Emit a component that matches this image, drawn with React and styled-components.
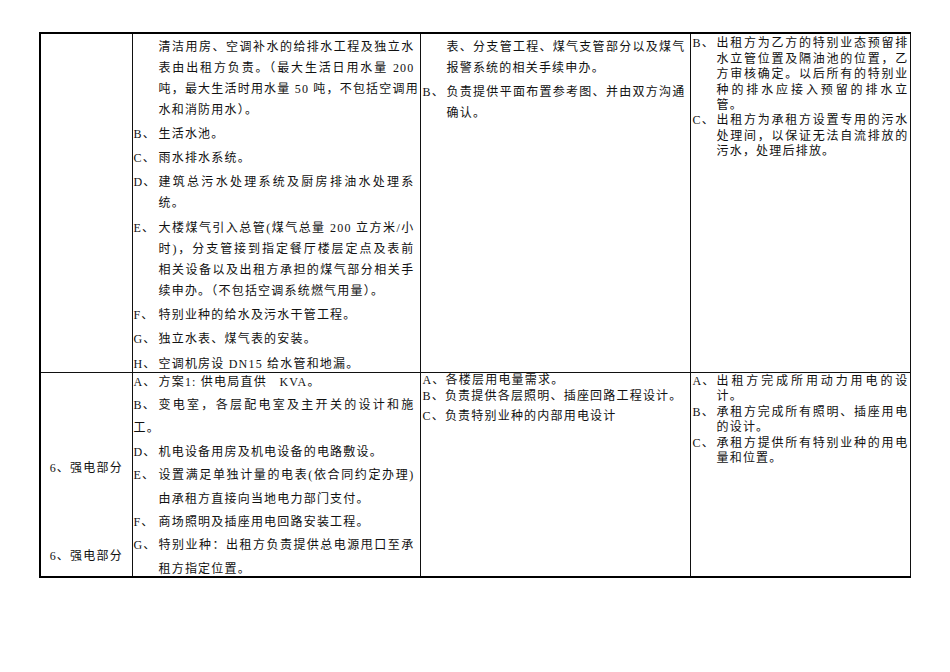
import styled, { createGlobalStyle } from "styled-components";

const Page = createGlobalStyle`
    body {
        margin: 0;
        background: #fff;
    }
`

const Wrapper = styled.div`
    padding: 32px 0 0 39px;
`

const Sheet = styled.table`
    border-collapse: collapse;
    table-layout: fixed;
    width: 870px;
    font-family: "Liberation Serif", "Noto Sans CJK SC", serif;
    font-size: 12px;
    letter-spacing: 1.2px;
    color: #111;
    border-left: 2px solid #000;
    border-top: 2px solid #000;
    border-bottom: 2px solid #000;
`

const Cell = styled.td`
    border: 1px solid #111;
    vertical-align: top;
    padding: 0 ${p => p.$pr}px 0 ${p => p.$pl}px;
`

// fixed box: negative offsets pull the text up without growing the row
const Body = styled.div`
    display: flow-root;
    margin-top: ${p => p.$pt}px;
    height: ${p => p.$t - p.$pt}px;
    line-height: ${p => p.$lh}px;
`

const Item = styled.div`
    margin-top: ${p => p.$gap}px;

    &:first-child {
        margin-top: 0;
    }
`

const Line = styled.div`
    display: flex;
`

const Label = styled.span`
    flex: 0 0 ${p => p.$w}px;
    white-space: nowrap;
`

const Text = styled.span`
    flex: 1;
    min-width: 0;
    white-space: nowrap;
    text-align: ${p => (p.$full ? "justify" : "left")};
    text-align-last: ${p => (p.$full ? "justify" : "auto")};
`

const Heading = styled.div`
    text-align: center;
    line-height: 21px;
    margin-top: ${p => p.$mt}px;
`

const r1c2 = [
    { lines: ["清洁用房、空调补水的给排水工程及独立水", "表由出租方负责。（最大生活日用水量 200", "吨，最大生活时用水量 50 吨，不包括空调用", "水和消防用水）。"] },
    { label: "B、", lines: ["生活水池。"] },
    { label: "C、", lines: ["雨水排水系统。"] },
    { label: "D、", lines: ["建筑总污水处理系统及厨房排油水处理系", "统。"] },
    { label: "E、", lines: ["大楼煤气引入总管(煤气总量 200 立方米/小", "时)，分支管接到指定餐厅楼层定点及表前", "相关设备以及出租方承担的煤气部分相关手", "续申办。（不包括空调系统燃气用量）。"] },
    { label: "F、", lines: ["特别业种的给水及污水干管工程。"] },
    { label: "G、", lines: ["独立水表、煤气表的安装。"] },
    { label: "H、", lines: ["空调机房设 DN15 给水管和地漏。"] },
]

const r1c3 = [
    { lines: ["表、分支管工程、煤气支管部分以及煤气", "报警系统的相关手续申办。"] },
    { label: "B、", lines: ["负责提供平面布置参考图、并由双方沟通", "确认。"] },
]

const r1c4 = [
    { label: "B、", lines: ["出租方为乙方的特别业态预留排", "水立管位置及隔油池的位置，乙", "方审核确定。以后所有的特别业", "种的排水应接入预留的排水立", "管。"] },
    { label: "C、", lines: ["出租方为承租方设置专用的污水", "处理间，以保证无法自流排放的", "污水，处理后排放。"] },
]

const r2c2 = [
    { label: "A、", lines: ["方案1: 供电局直供\u00a0\u00a0 KVA。"] },
    { label: "B、", lines: ["变电室，各层配电室及主开关的设计和施", "工。"], flush: true },
    { label: "D、", lines: ["机电设备用房及机电设备的电路敷设。"] },
    { label: "E、", lines: ["设置满足单独计量的电表(依合同约定办理)", "由承租方直接向当地电力部门支付。"] },
    { label: "F、", lines: ["商场照明及插座用电回路安装工程。"] },
    { label: "G、", lines: ["特别业种：出租方负责提供总电源甩口至承", "租方指定位置。"] },
]

const r2c3 = [
    { label: "A、", lines: ["各楼层用电量需求。"] },
    { label: "B、", lines: ["负责提供各层照明、插座回路工程设计。"] },
    { label: "C、", lines: ["负责特别业种的内部用电设计"], gap: 4 },
]

const r2c4 = [
    { label: "A、", lines: ["出租方完成所用动力用电的设", "计。"] },
    { label: "B、", lines: ["承租方完成所有照明、插座用电", "的设计。"] },
    { label: "C、", lines: ["承租方提供所有特别业种的用电", "量和位置。"] },
]

const Entries = ({ items, w, gap }) => (
    <>
        {items.map((item, n) => (
            <Item key={n} $gap={item.gap ?? gap}>
                {item.lines.map((t, i) => {
                    const full = i < item.lines.length - 1
                    const spacer = i === 0 ? item.label || "" : item.flush ? null : ""
                    return (
                        <Line key={i}>
                            {spacer !== null && <Label $w={w}>{spacer}</Label>}
                            <Text $full={full}>{t}</Text>
                        </Line>
                    )
                })}
            </Item>
        ))}
    </>
)

const TOP = 338
const BOTTOM = 203

const App = () => {
    return (
        <Wrapper>
            <Page />
            <Sheet>
                <colgroup>
                    <col style={{ width: 92 }} />
                    <col style={{ width: 288 }} />
                    <col style={{ width: 270 }} />
                    <col style={{ width: 220 }} />
                </colgroup>
                <tbody>
                    <tr>
                        <Cell $pl={0} $pr={0}>
                            <Body $pt={0} $t={TOP} $lh={21} />
                        </Cell>
                        <Cell $pl={1} $pr={5}>
                            <Body $pt={2.5} $t={TOP} $lh={21}>
                                <Entries items={r1c2} w={25} gap={3.3} />
                            </Body>
                        </Cell>
                        <Cell $pl={2} $pr={4}>
                            <Body $pt={2.5} $t={TOP} $lh={21}>
                                <Entries items={r1c3} w={24} gap={3.3} />
                            </Body>
                        </Cell>
                        <Cell $pl={2} $pr={1}>
                            <Body $pt={2.3} $t={TOP} $lh={15.4}>
                                <Entries items={r1c4} w={24} gap={0} />
                            </Body>
                        </Cell>
                    </tr>
                    <tr>
                        <Cell $pl={0} $pr={0}>
                            <Body $pt={0} $t={BOTTOM} $lh={21}>
                                <Heading $mt={85}>6、强电部分</Heading>
                                <Heading $mt={67}>6、强电部分</Heading>
                            </Body>
                        </Cell>
                        <Cell $pl={1} $pr={5}>
                            <Body $pt={-2.5} $t={BOTTOM} $lh={23.4}>
                                <Entries items={r2c2} w={25} gap={0} />
                            </Body>
                        </Cell>
                        <Cell $pl={2} $pr={4}>
                            <Body $pt={-1} $t={BOTTOM} $lh={16}>
                                <Entries items={r2c3} w={22} gap={0} />
                            </Body>
                        </Cell>
                        <Cell $pl={2} $pr={1}>
                            <Body $pt={1} $t={BOTTOM} $lh={15.4}>
                                <Entries items={r2c4} w={24} gap={0} />
                            </Body>
                        </Cell>
                    </tr>
                </tbody>
            </Sheet>
        </Wrapper>
    )
}

export default App
